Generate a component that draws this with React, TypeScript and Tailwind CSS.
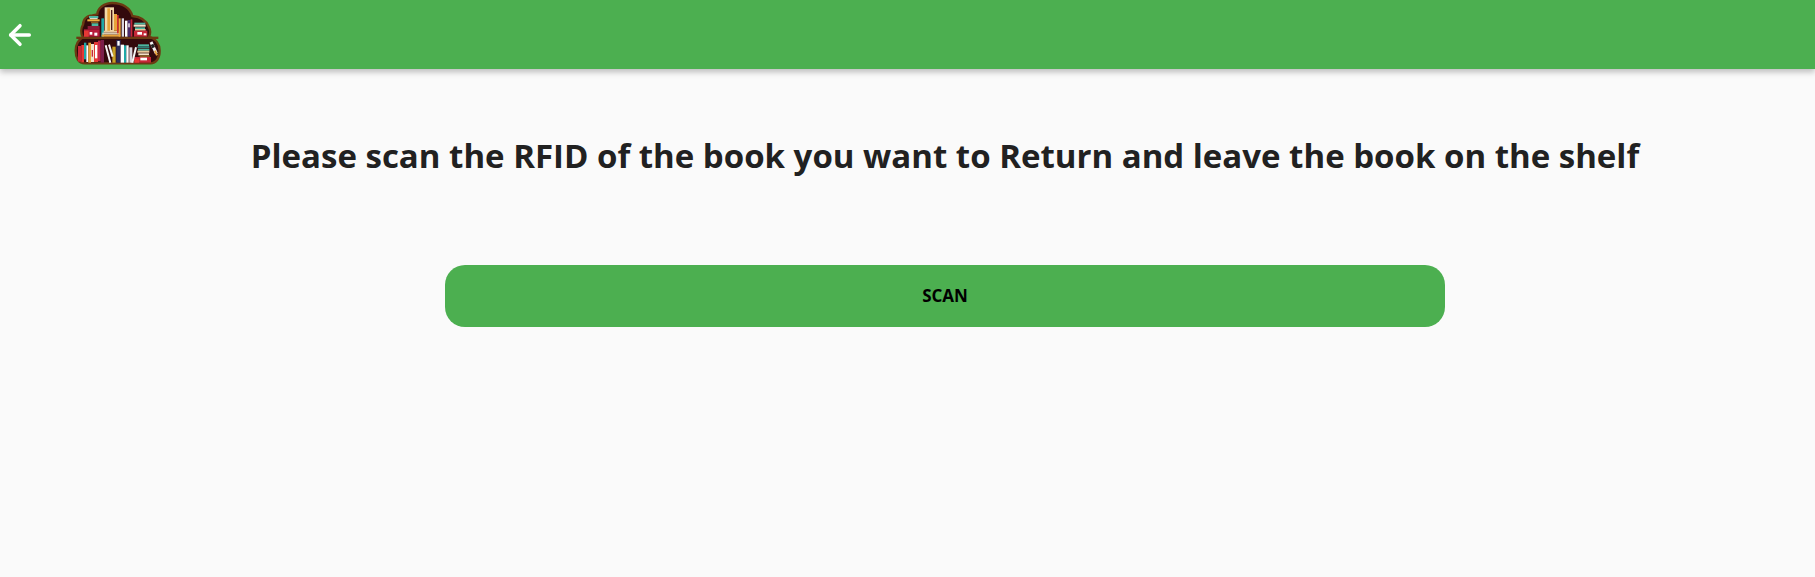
import React from 'react';
import { ArrowLeft } from 'lucide-react';

// pixel-art bookshelf, coordinates are 3x of the 95x70 logo box
const books: [number, number, number, number, string][] = [
  // upper shelf, left stack
  [60, 48, 28, 6, '#4db6a0'], [62, 54, 24, 4, '#d9d4c4'], [55, 58, 37, 6, '#f0b040'], [66, 64, 22, 6, '#8a5a20'],
  [68, 70, 20, 8, '#4db6a0'], [56, 78, 36, 10, '#8e1b3a'], [45, 88, 47, 22, '#b71c3c'], [45, 92, 14, 18, '#e53935'],
  [62, 96, 8, 8, '#ffffff'], [76, 98, 9, 9, '#ffffff'],
  // upper shelf, middle
  [97, 55, 8, 55, '#1fa8a8'], [107, 22, 28, 73, '#f3d9a8'], [115, 25, 8, 68, '#e8a33a'], [126, 30, 4, 60, '#4a1a1a'],
  [104, 92, 44, 6, '#e8c89a'], [100, 98, 50, 6, '#d8c8b0'], [98, 104, 56, 6, '#e8a33a'],
  [135, 42, 9, 50, '#e8a33a'], [144, 45, 5, 55, '#d32f2f'], [149, 55, 6, 55, '#f2a93b'],
  [158, 55, 7, 55, '#d8d4dc'], [168, 62, 8, 48, '#ffffff'], [176, 60, 9, 50, '#4a2a6a'], [178, 70, 4, 12, '#ffffff'], [185, 58, 5, 52, '#c62838'],
  // upper shelf, right stack
  [196, 68, 33, 6, '#4db6a0'], [194, 74, 36, 6, '#f3e3c8'], [198, 82, 30, 5, '#4db6a0'], [198, 87, 32, 5, '#e8c89a'],
  [195, 92, 40, 18, '#c62838'], [205, 96, 14, 8, '#ffffff'], [224, 100, 8, 6, '#ffffff'],
  // lower shelf, left run
  [27, 138, 10, 47, '#c62838'], [37, 135, 8, 52, '#e53935'], [45, 128, 7, 50, '#1fa8a8'], [52, 136, 6, 50, '#ffffff'],
  [58, 128, 8, 60, '#e8a33a'], [66, 132, 9, 54, '#f3e3c8'], [68, 150, 4, 20, '#c62838'],
  [75, 126, 12, 60, '#e53935'], [78, 135, 7, 40, '#ffffff'], [87, 122, 8, 62, '#c2274a'], [95, 120, 10, 68, '#7b1f4a'],
  // lower shelf, middle run
  [130, 140, 10, 48, '#c9a227'], [142, 120, 13, 68, '#2d2d5a'], [145, 123, 7, 14, '#ffffff'], [155, 134, 10, 54, '#ffffff'],
  [165, 136, 7, 52, '#1fa8a8'], [172, 136, 7, 52, '#ffffff'], [181, 142, 9, 46, '#d8d4dc'],
  // lower shelf, right stack
  [207, 133, 33, 6, '#4db6a0'], [205, 139, 36, 5, '#2f7f78'], [207, 146, 34, 6, '#4db6a0'], [205, 152, 36, 6, '#e8c89a'],
  [208, 160, 32, 6, '#f3e3c8'], [212, 166, 30, 5, '#8a5a20'], [196, 171, 50, 17, '#c62838'], [196, 176, 14, 12, '#e53935'], [214, 173, 20, 8, '#ffffff'],
];

function ShelfLogo() {
  return (
    <svg width="95" height="69" viewBox="0 0 285 207" className="shrink-0 overflow-visible">
      <path
        d="M48 190 C28 190 20 172 20 152 C20 134 28 120 42 112 C34 100 36 84 42 74 C42 58 54 46 70 46 L85 43 C86 24 106 9 130 9 C160 9 184 24 190 48 C212 50 232 60 240 82 C245 92 244 102 240 110 C260 116 272 132 272 152 C272 174 262 190 244 190 Z"
        fill="#33090c"
        stroke="#6b3a12"
        strokeWidth="7"
      />
      <rect x="22" y="110" width="246" height="7" fill="#6b3a12" />
      {books.map(([x, y, w, h, c], i) => (
        <rect key={i} x={x} y={y} width={w} height={h} fill={c} />
      ))}
      <path d="M110 136 L124 188 M120 134 L131 170 M190 188 L201 142" stroke="#f5f5f5" strokeWidth="6" fill="none" />
      <path d="M246 126 L262 160" stroke="#f5f5f5" strokeWidth="9" fill="none" />
      <path d="M249 133 L254 143" stroke="#222222" strokeWidth="9" fill="none" />
      <path d="M258 152 L264 166" stroke="#e8a33a" strokeWidth="6" fill="none" />
    </svg>
  );
}

export default function App() {
  return (
    <div className="flex h-[577px] flex-col bg-[#fafafa] font-['Open_Sans','Noto_Sans',sans-serif]">
      <header className="flex h-[69px] shrink-0 items-center bg-[#4caf50] shadow-[0_3px_6px_rgba(0,0,0,0.25)]">
        <button className="ml-[4px] flex h-8 w-8 items-center justify-center text-white">
          <ArrowLeft size={32} strokeWidth={2.6} />
        </button>
        <div className="ml-[33px]">
          <ShelfLogo />
        </div>
      </header>
      <main className="flex flex-col items-center pl-[75px]">
        <h1 className="mt-[64px] text-[33px] leading-[46px] font-bold text-[#212121]">
          Please scan the RFID of the book you want to Return and leave the book on the shelf
        </h1>
        <button className="mt-[86px] h-[62px] w-[1000px] rounded-[20px] bg-[#4caf50] text-[17px] font-bold text-black">
          SCAN
        </button>
      </main>
    </div>
  );
}
